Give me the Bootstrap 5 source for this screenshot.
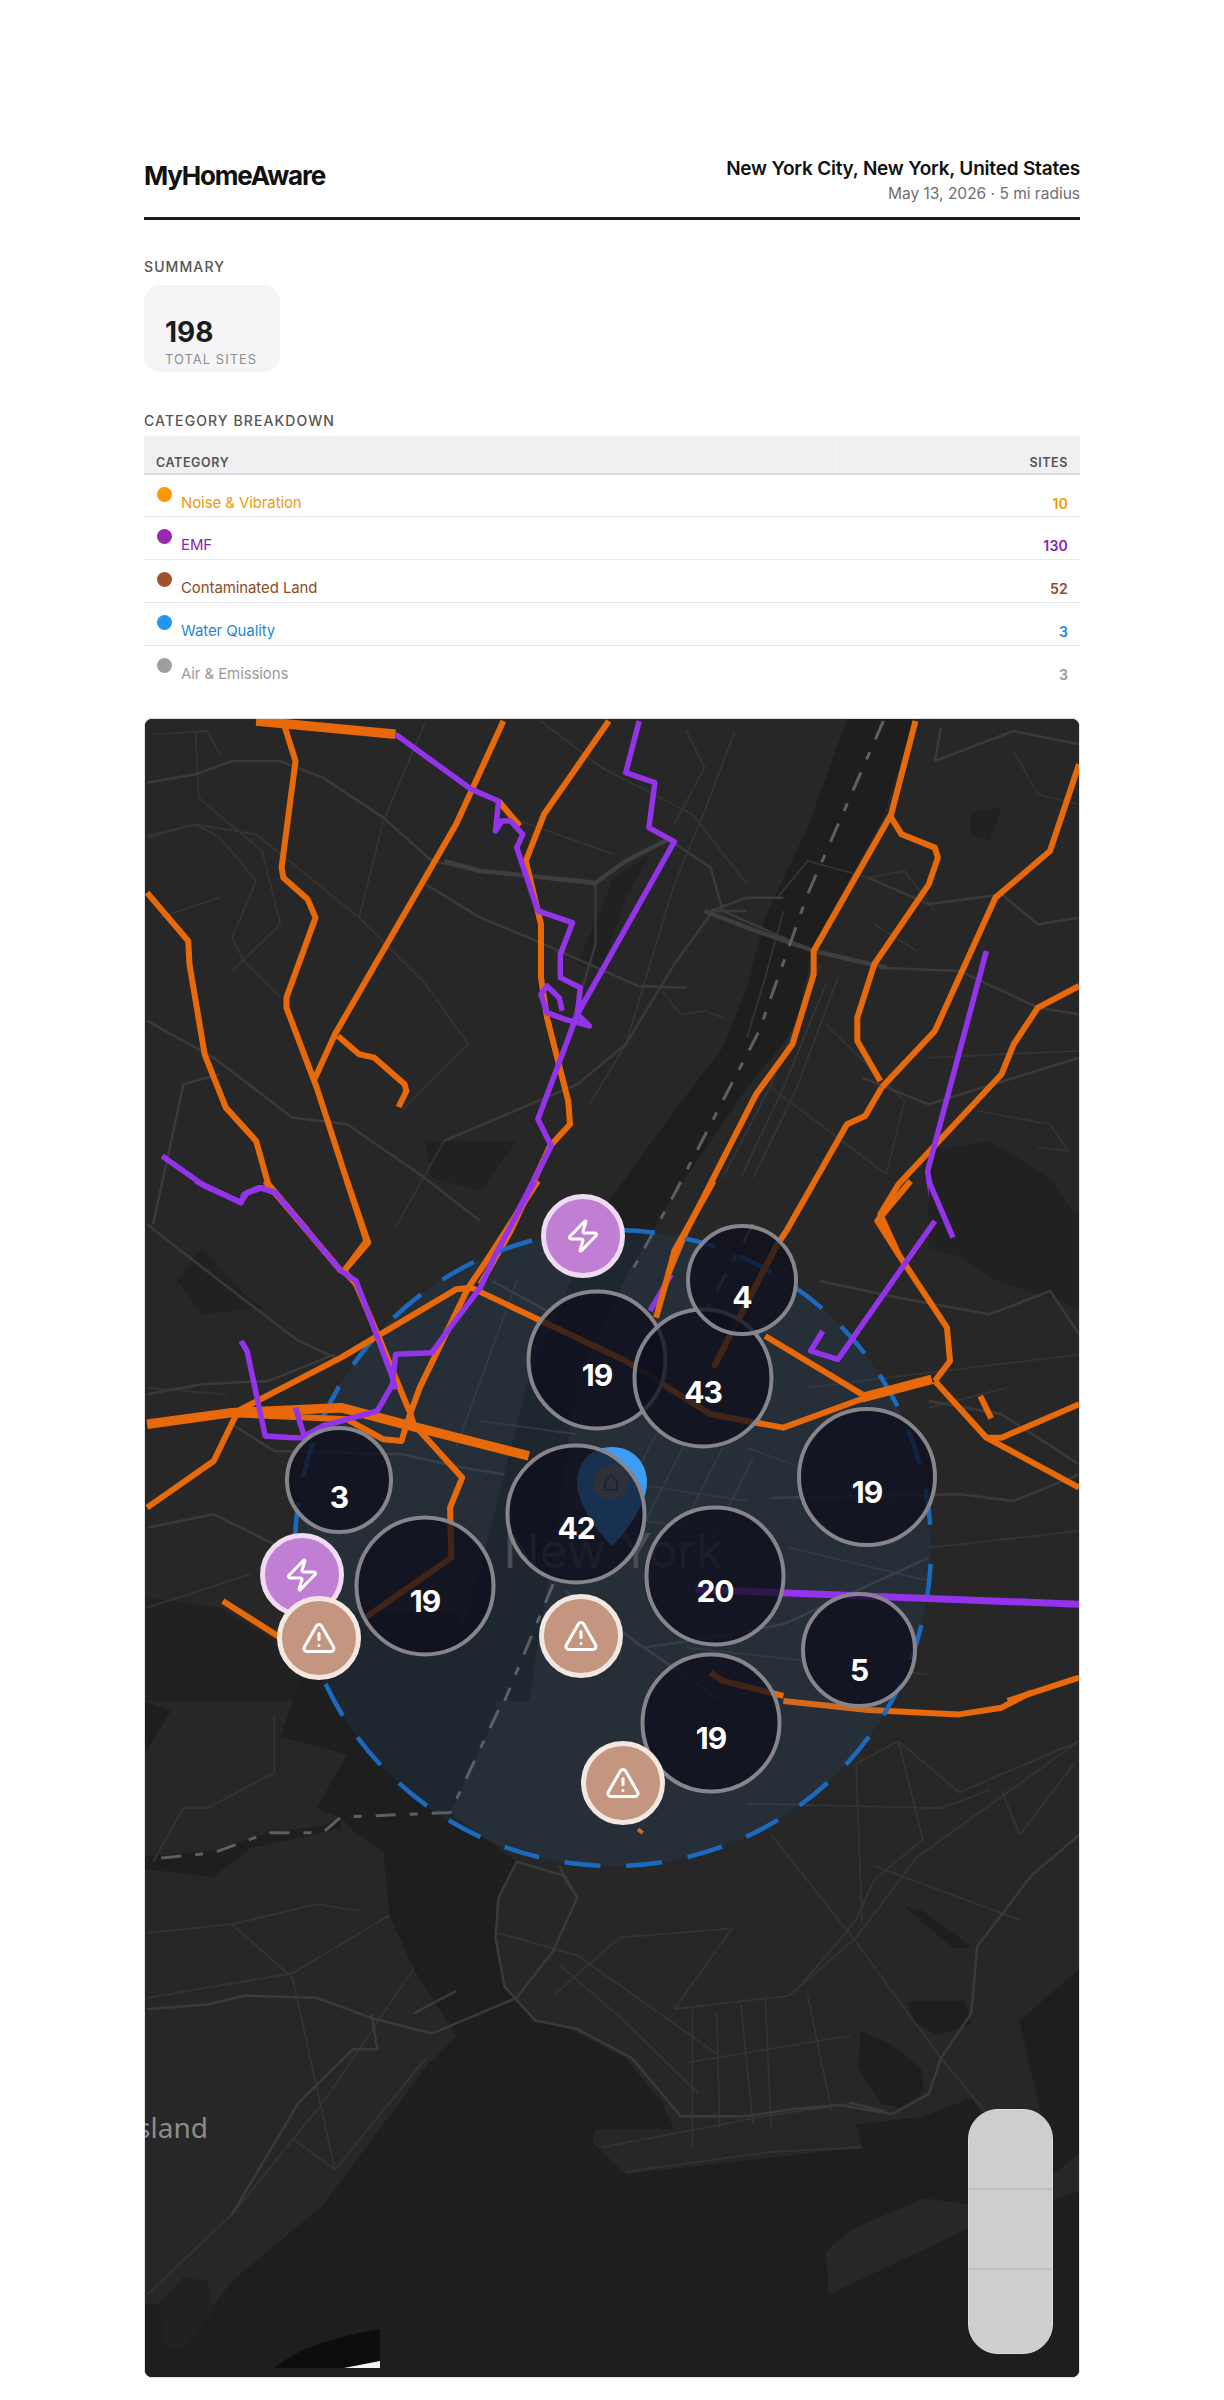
<!DOCTYPE html>
<html lang="en"><head><meta charset="utf-8"><title>MyHomeAware</title>
<link href="https://cdn.jsdelivr.net/npm/bootstrap@5.3.0/dist/css/bootstrap.min.css" rel="stylesheet">
<style>
html,body{background:#fff;margin:0}
.rpt{font-family:Inter,"Liberation Sans",sans-serif;width:936px;margin:0 auto 0 144px;padding-top:155px;color:#111}
.rpt-head{border-bottom:3px solid #1c1c1e;height:65px}
.rpt-brand{font-size:26px;font-weight:700;letter-spacing:-1.2px;line-height:30px;margin-top:6px}
.rpt-place{font-size:19px;font-weight:600;line-height:24px;letter-spacing:-.2px;margin-top:2px}
.rpt-date{font-size:15.5px;color:#6e6e73;line-height:20px;margin-top:3px}
.sec-label{font-size:14px;font-weight:500;letter-spacing:1.1px;color:#555;line-height:18px;text-transform:uppercase}
.sec-a{margin-top:38px}
.sec-b{margin-top:40px}
.stat{width:136px;height:87px;background:#f5f5f7;border-radius:16px;padding:31px 21px 0;margin-top:9px}
.stat-n{font-size:28px;font-weight:700;line-height:32px;color:#1c1c1e}
.stat-l{font-size:13px;color:#8e8e93;letter-spacing:1px;line-height:18px;margin-top:2px}
.cat-tb{width:936px;font-size:15px;margin:6px 0 0;border-collapse:collapse}
.cat-tb th{background:#f0f0f2;height:38px;padding:0 12px 2px;vertical-align:bottom;font-size:12.5px;font-weight:600;letter-spacing:.6px;color:#555;border-bottom:2px solid #dcdcde;text-transform:uppercase;line-height:16px}
.cat-tb th+th{border-left:1px solid #f5f5f6}
.cat-tb td{height:42.75px;padding:12px 12px 0;vertical-align:top;border-bottom:1px solid #e9e9ec;line-height:20px;font-size:15px;letter-spacing:-.1px}
.cat-tb tr:last-child td{border-bottom:0}
.cat-tb td+td{padding-top:19px;font-size:14px;font-weight:600;text-align:right;letter-spacing:.2px}
.cdot{display:inline-block;width:15px;height:15px;border-radius:50%;margin-left:1px;margin-right:9px;vertical-align:6px}
.c-o{color:#f09a0e}.c-o .cdot{background:#ff9800}
.c-p{color:#8e24aa}.c-p .cdot{background:#9c27b0}
.c-b{color:#8f4a28}.c-b .cdot{background:#a0522d}
.c-w{color:#1e88d8}.c-w .cdot{background:#2196f3}
.c-g{color:#9a9a9a}.c-g .cdot{background:#9e9e9e}
.mapbox{position:relative;width:936px;height:1660px;margin-top:30px;overflow:hidden;border-radius:8px;border:1px solid #e2e2e2;background:#1e1e1e}
.mapbox svg.basemap{display:block;position:absolute;left:0;top:0}
.r,.r2,.r3,.o,.pl,.dk,.st{fill:none;vector-effect:non-scaling-stroke;stroke-linejoin:round}
.r{stroke:#3a3a3a;stroke-width:2.5}
.r2{stroke:#3e3e3e;stroke-width:4.5}
.r3{stroke:#343434;stroke-width:1.8}
.o{stroke:#e8690a;stroke-width:6}
.o2{stroke-width:9.5}
.pl{stroke:#9333ea;stroke-width:5.5}
.pl2{stroke-width:7}
.st{stroke:#5f5f5f;stroke-width:3;stroke-dasharray:20 14 8 14}
.wt{fill:#1e1e1e}
.lk{fill:#212121}
.clu{position:absolute;transform:translate(-50%,-50%);border-radius:50%;border:4px solid #85858b;background:rgba(13,15,27,.76);color:#fff;font-weight:700;font-size:30px;letter-spacing:-1px;line-height:1;display:flex;align-items:center;justify-content:center}
.mk{position:absolute;width:84px;height:84px;transform:translate(-50%,-50%);border-radius:50%;display:flex;align-items:center;justify-content:center;border:5px solid}
.mk svg{width:36px;height:36px;fill:none;stroke:#fff;stroke-width:2;stroke-linecap:round;stroke-linejoin:round}
.mk-e{background:#c07fd3;border-color:#efdcf4}
.mk-w{background:#c49680;border-color:#f2e8e1}
.zoomer{position:absolute;right:26px;bottom:23px;width:85px;height:245px;border-radius:30px;background:rgba(212,212,212,.97);border:1px solid #dedede;overflow:hidden}
.zoomer div{height:80px;border-bottom:2px solid #bfbfbf}
.zoomer div:last-child{border:0}
</style></head><body>
<div class="rpt">
 <div class="rpt-head d-flex justify-content-between align-items-start">
  <div class="rpt-brand">MyHomeAware</div>
  <div class="text-end"><div class="rpt-place">New York City, New York, United States</div><div class="rpt-date">May 13, 2026 · 5 mi radius</div></div>
 </div>
 <div class="sec-label sec-a">Summary</div>
 <div class="stat"><div class="stat-n">198</div><div class="stat-l">TOTAL SITES</div></div>
 <div class="sec-label sec-b">Category Breakdown</div>
 <table class="cat-tb">
  <thead><tr><th style="width:692px">Category</th><th class="text-end">Sites</th></tr></thead>
  <tbody>
   <tr class="c-o"><td><span class="cdot"></span>Noise &amp; Vibration</td><td>10</td></tr>
   <tr class="c-p"><td><span class="cdot"></span>EMF</td><td>130</td></tr>
   <tr class="c-b"><td><span class="cdot"></span>Contaminated Land</td><td>52</td></tr>
   <tr class="c-w"><td><span class="cdot"></span>Water Quality</td><td>3</td></tr>
   <tr class="c-g"><td><span class="cdot"></span>Air &amp; Emissions</td><td>3</td></tr>
  </tbody>
 </table>
 <div class="mapbox">
  <svg class="basemap" width="936" height="1660" viewBox="144 718 936 1660" xmlns="http://www.w3.org/2000/svg">
   <rect x="144" y="718" width="936" height="1660" fill="#272727"/>
   <!-- z3 frame -->
   <g transform="translate(140 710) scale(.606 .3333)">
    <path class="wt" d="M1170 0L1280 0 1225 320 1110 700 1080 950 1000 1130 880 1450 800 1700 720 2000 690 2400 640 2970 500 2970 570 2500 640 2000 760 1500 880 1200 960 1010 1000 830 1030 620 1100 350z"/>
    <path class="lk" d="M1300 1320L1400 1290 1500 1400 1560 1560 1560 1800 1400 1700 1300 1560z"/>
    <path class="lk" d="M780 500L840 430 800 560 760 780 720 760z"/>
    <path class="lk" d="M470 1290L620 1290 560 1440 480 1400z"/>
    <path class="lk" d="M1370 300L1420 290 1400 390 1370 370z"/>
    <path class="r3" d="M10 375L90 340 190 370 360 620 470 820 540 1000 430 1200M90 60L95 260 200 420 230 640 150 780M470 30L400 330 360 620M20 70L110 60 130 130M660 30L760 170 910 310 1000 520M900 60L930 170 880 340M980 60L930 300 880 520 840 760 800 1000 740 1180M1060 600L1030 800 1000 980M1120 760L1040 1120 960 1400M1130 820L1060 1130 990 1400M1150 800L1080 1140 1010 1400M1200 500L1260 480 1310 600M1440 120L1480 250 1548 280M1380 1200L1500 1240 1530 1320 1480 1310M1040 1130L1230 1390M1300 1040L1548 1020M10 380L90 340 130 380 190 510 150 680 170 750 230 860M1050 560L1100 450 1200 500M1130 940L1260 1170 1230 1390M500 1290L420 1550M860 840L890 910 930 900 960 920M610 320L780 430M1210 640L1280 720M30 620L130 560"/>
    <path class="r" d="M10 215L90 190 150 150 230 150 300 200 400 320 480 450 560 480 750 520 800 450 870 385 940 470 960 600 1110 720 1220 770 1350 780 1480 890 1548 910M10 930L120 1040 250 1220 340 1240 460 1390 560 1530M470 520L560 620 640 680 820 825 900 830M20 1540L70 1120 130 1090M1000 600L940 600 1000 560 1060 560M750 520L750 700 700 1000M500 1290L720 1120 800 1000 880 760 940 610M1200 500L1300 580 1420 550 1480 640 1548 620M1320 50L1310 150 1440 60 1548 100M1190 1100L1300 1180 1548 1040"/>
    <path class="r2" d="M500 450L560 480 750 515 800 450 870 385M930 600L1000 650 1110 720 1230 770"/>
    <path class="st" d="M1225 30L1100 550 1020 960 880 1450 810 1680"/>
    <path class="o" d="M235 35L255 150 232 470 235 500 275 565 288 620 240 860 240 890 290 1130 372 1590 335 1680M10 545L78 690 80 760 105 1030 140 1190 190 1290 210 1420 275 1560M598 30L520 340 320 970 285 1110M325 975L360 1030 385 1040 435 1120 438 1140 425 1188M772 30L665 310 635 450 660 640 660 800 670 920 705 1170 708 1240 675 1305 610 1560 560 1720M590 270L625 345M1278 30L1238 310 1110 720 1110 790 1075 1000 1015 1150 900 1560 870 1690M1238 320L1255 370 1310 410 1315 440 1300 520 1210 760 1182 920 1182 990 1220 1110M1222 1130L1195 1215 1165 1240 1065 1560M1548 160L1500 420 1410 560 1310 960 1222 1130M1548 825L1480 890 1440 1000 1420 1090 1250 1420 1220 1510 1250 1630"/>
    <path class="o o2" d="M190 30L420 70"/>
    <path class="pl" d="M420 70L545 235 590 270 585 360 595 330 610 330 630 370 620 410 655 600 712 635 692 730 692 800 725 830 720 910 740 945 700 925 670 905 660 850 670 825 690 860 695 900M822 30L800 185 848 215 838 350 880 392 720 910 655 1225 677 1305 605 1560 585 1630M1395 720L1298 1380 1308 1500 1340 1580M35 1335L105 1425 165 1475 170 1450 200 1430 220 1445 275 1560"/>
   </g>
   <!-- z4 frame -->
   <g transform="translate(140 1180) scale(.606 .3333)">
    <path class="lk" d="M1300 0L1400 60 1548 100 1548 300 1420 260 1300 200zM100 200L170 340 200 380 100 400 60 300zM10 1250L130 1280 240 1400 330 1560 10 1560z"/>
    <path class="r3" d="M620 300L560 600 520 800M560 720L720 760M1000 800L1300 1000M1548 1050L1300 1100M10 1280L180 1180M1100 620L1548 520M1300 680L1430 620M10 620L140 640M850 760L770 1040M900 780L810 1100M960 800L860 1160M1010 830L900 1230M780 900L1000 960M760 1000L980 1060M1070 1100L1300 1200M900 1400L1300 1480"/>
    <path class="r" d="M10 130L130 300 260 480 320 530M10 640L100 610 210 600 320 520M150 730L220 810 430 820 530 860 600 880M1548 460L1500 330 1400 400 1250 350 1120 300M1300 660L1420 700 1548 850M1040 950L1350 940 1440 960 1548 880M10 1040L120 1000 220 1090 330 1150M580 300L680 400M830 1400L940 1370 1060 1330 1300 1130M700 1230L830 1400 960 1560M450 1350L330 1560"/>
    <path class="st" d="M1010 130L935 380M680 1210L600 1560"/>
    <path class="pl" d="M875 280L840 390"/>
   </g>
   <!-- z5 frame -->
   <g transform="translate(140 1700) scale(.606 .4464)">
    <path class="wt" d="M70 1450L110 1370 150 1300 300 1130 470 820 520 750 450 600 410 480 400 340 350 290 330 262 290 240 340 120 230 80 300 -200 520 -200 590 20 510 250 620 360 590 440 585 530 600 640 650 720 700 730 800 800 860 900 880 960 750 960 745 990 800 1060 1190 1000 1180 950 1290 930 1370 890 1386 920 1485 925 1449 717 1548 600 1548 1013 1507 1061 1365 1128 1292 1114 1172 1184 1130 1233 1135 1330 1365 1181 1548 1098 1560 1540 0 1540 0 1350 30 1350 40 1450z"/>
    <path class="wt" d="M0 375L120 395 180 330 330 285 330 262 300 280 210 295 120 335 0 350z"/>
    <path class="wt" d="M0 0L50 20 10 110 0 110zM1260 460L1290 470 1370 550 1340 555zM1265 672L1359 672 1370 724 1314 750 1276 717zM1188 739L1238 769 1287 821 1292 874 1254 911 1221 903 1183 821z"/>
    <path class="lk" d="M40 1450L30 1350 70 1290 110 1300 120 1370 70 1450z"/>
    <path class="r3" d="M10 520L150 500 290 455 360 470M150 500L250 620 320 1050M10 665L250 610 410 480M450 600L300 900 150 1150 10 1330M250 980L320 1050 470 800M590 520L720 570 950 790M680 660L790 530 970 510M690 590L800 720 920 880M880 690L975 510M880 690L1070 660 1180 530 1280 350 1548 90M900 810L1170 750M910 690L910 1000M950 700L955 960M990 680L1010 950M1030 660L1040 960M1100 660L1140 920M1040 300L1180 540 1320 800 1400 930M1420 200L1450 300 1540 140M1180 140L1250 90 1350 205 1548 90M1180 140L1190 500M1250 90L1290 310 1210 400 1180 490 1150 540 1080 650M1000 230L1320 240 1400 200M1210 370L1450 490M760 1000L1030 930 1180 900M800 1055L1040 1010 1190 1000M220 30L220 160 110 240 70 240 20 360"/>
    <path class="r" d="M10 690L110 680 170 660 290 665 380 710 480 745 620 665 680 560 720 440 695 390 620 360 590 440 585 530 600 640 650 715 720 735 810 800 860 880 890 930 1000 930 1070 915 1150 905 1240 925 1300 880 1320 800 1370 700 1380 550 1470 390 1548 300M380 700L390 780 350 780 260 900 150 1150M690 370L720 440M450 700L520 650M1170 900L1230 920"/>
    <path class="st" d="M590 20L510 250 330 260 300 295 210 295 120 340 10 355"/>
    <path class="o" d="M1060 0L1200 20 1350 30 1420 15 1470 -20M822 295L826 288"/>
   </g>
   <circle cx="612" cy="1547" r="318" fill="rgb(40,110,190)" fill-opacity=".11" stroke="#1a6bbf" stroke-width="4.5" stroke-dasharray="36 26" stroke-dashoffset="-16"/>
   <text x="612" y="1567" text-anchor="middle" font-family="Inter,Liberation Sans,sans-serif" font-size="48" fill="#474e58">New York</text>
   <text x="207" y="2137" text-anchor="end" font-family="Noto Sans,sans-serif" font-size="28" fill="#8c8c8c">Island</text>
   <!-- z4 lines over radius -->
   <g transform="translate(140 1180) scale(.606 .3333)">
    <path class="o" d="M205 0L330 270M1065 150L1050 190 990 400 945 560M940 1475L960 1500 1060 1545M1310 600L1395 770 1548 920M1395 770L1420 770 1548 670M1030 465L1190 640M1385 645L1403 712M135 1260L230 1370M1548 1490L1430 1560M1270 0L1215 120 1250 220 1330 440 1335 540 1310 600M340 0L375 185 335 270 355 310 395 480 445 700 450 730 530 890 510 980 512 1130 370 1310M945 0L880 210 870 280 850 410M655 0L570 240 540 320 460 620 440 720 430 780 400 775 340 715 150 700"/>
    <path class="o" d="M10 980L120 840 160 690 330 530 520 325 545 320 800 540 940 700 1060 740 1180 660 1300 600"/>
    <path class="o o2" d="M10 730L150 695 330 680 435 730 640 825M1190 650L1305 595"/>
    <path class="pl" d="M90 0L165 65 175 35 195 20 222 35 330 270 355 300 415 590 420 625M650 0L585 220 560 320 510 440 480 515 420 520 415 610 390 690 300 735 265 770M165 480L175 510 205 765 250 770 270 770 255 680M1300 0L1340 170M1310 120L1150 535 1105 510 1125 450"/>
    <path class="pl pl2" d="M915 1225L1548 1270"/>
   </g>
   <path d="M273 2367C300 2345 340 2335 379 2328V2367z" fill="#0d0d0d"/>
   <path d="M343 2367L379 2360V2367z" fill="#f5f5f5"/>
   <!-- location pin -->
   <path d="M611 1446C590 1446 576 1462 576 1481 576 1503 596 1530 611 1545 626 1530 646 1503 646 1481 646 1462 632 1446 611 1446z" fill="#3d9df5"/>
   <circle cx="610" cy="1481" r="17.5" fill="#a09a96"/>
   <path d="M604 1489V1481L610 1474 616 1481V1489z" fill="none" stroke="#3f6ea8" stroke-width="2"/>
  </svg>
  <div class="clu" style="left:452px;top:641px;width:141px;height:141px;padding-top:30px">19</div>
  <div class="clu" style="left:558px;top:659px;width:141px;height:141px;padding-top:28px">43</div>
  <div class="clu" style="left:597px;top:561px;width:112px;height:112px;padding-top:34px">4</div>
  <div class="clu" style="left:722px;top:758px;width:140px;height:140px;padding-top:30px">19</div>
  <div class="clu" style="left:431px;top:795px;width:141px;height:141px;padding-top:28px">42</div>
  <div class="clu" style="left:194px;top:761px;width:108px;height:108px;padding-top:34px">3</div>
  <div class="clu" style="left:280px;top:867px;width:141px;height:141px;padding-top:30px">19</div>
  <div class="clu" style="left:570px;top:857px;width:141px;height:141px;padding-top:30px">20</div>
  <div class="clu" style="left:714px;top:931px;width:116px;height:116px;padding-top:40px">5</div>
  <div class="clu" style="left:566px;top:1004px;width:141px;height:141px;padding-top:30px">19</div>
  <div class="mk mk-e" style="left:438px;top:517px"><svg viewBox="0 0 24 24"><path d="M4 14a1 1 0 0 1-.78-1.63l9.9-10.2a.5.5 0 0 1 .86.46l-1.92 6.02A1 1 0 0 0 13 10h7a1 1 0 0 1 .78 1.63l-9.9 10.2a.5.5 0 0 1-.86-.46l1.92-6.02A1 1 0 0 0 11 14z"/></svg></div>
  <div class="mk mk-e" style="left:157px;top:856px"><svg viewBox="0 0 24 24"><path d="M4 14a1 1 0 0 1-.78-1.63l9.9-10.2a.5.5 0 0 1 .86.46l-1.92 6.02A1 1 0 0 0 13 10h7a1 1 0 0 1 .78 1.63l-9.9 10.2a.5.5 0 0 1-.86-.46l1.92-6.02A1 1 0 0 0 11 14z"/></svg></div>
  <div class="mk mk-w" style="left:174px;top:919px"><svg viewBox="0 0 24 24"><path d="m21.73 18-8-14a2 2 0 0 0-3.48 0l-8 14A2 2 0 0 0 4 21h16a2 2 0 0 0 1.73-3"/><path d="M12 9v4"/><path d="M12 17h.01"/></svg></div>
  <div class="mk mk-w" style="left:436px;top:917px"><svg viewBox="0 0 24 24"><path d="m21.73 18-8-14a2 2 0 0 0-3.48 0l-8 14A2 2 0 0 0 4 21h16a2 2 0 0 0 1.73-3"/><path d="M12 9v4"/><path d="M12 17h.01"/></svg></div>
  <div class="mk mk-w" style="left:478px;top:1064px"><svg viewBox="0 0 24 24"><path d="m21.73 18-8-14a2 2 0 0 0-3.48 0l-8 14A2 2 0 0 0 4 21h16a2 2 0 0 0 1.73-3"/><path d="M12 9v4"/><path d="M12 17h.01"/></svg></div>
  <div class="zoomer"><div></div><div></div><div></div></div>
 </div>
</div>
<script src="https://cdn.jsdelivr.net/npm/bootstrap@5.3.0/dist/js/bootstrap.bundle.min.js"></script>
</body></html>
